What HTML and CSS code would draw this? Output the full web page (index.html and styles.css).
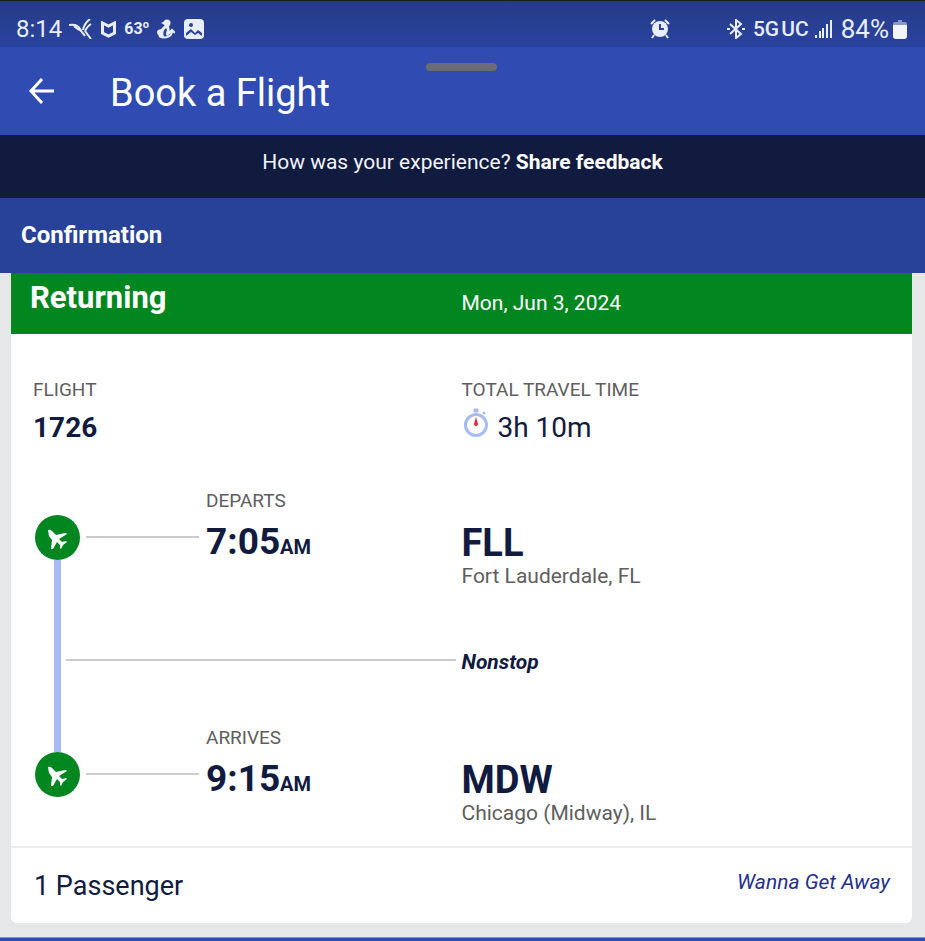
FILE: index.html
```html
<!DOCTYPE html>
<html lang="en">
<head>
    <meta charset="UTF-8">
    <meta name="viewport" content="width=device-width, initial-scale=1.0">
    <title>Book a Flight</title>
    <link rel="stylesheet" href="styles.css">
</head>
<body>
    <div class="status-bar">
        <div class="status-left">
            <span class="clock">8:14</span>
            <svg class="icon-bird" width="24" height="20" viewBox="0 0 24 20" fill="none" stroke="#e8eefc">
                <path d="M0 6c6-1 9 0 11 4 1 3 3 4 5 7" stroke-width="2" />
                <path d="M5 7c3 3 5 4 8 5" stroke-width="2" />
                <path d="M21 0c-4 3-6 6-7 11M22 5c-3 2-5 4-6 8M16 12l6 8" stroke-width="2" />
            </svg>
            <svg width="15" height="17" viewBox="0 0 15 17" fill="none" stroke="#e8eefc" stroke-width="3">
                <path d="M1.500 2v10l6 3 6-3V2l-6 3z" />
            </svg>
            <span class="temp">63<sup>o</sup></span>
            <svg width="18" height="20" viewBox="0 0 18 20" fill="#e8eefc">
                <circle cx="10" cy="4" r="3.500" />
                <path d="M4 4l4-2v4zM7 7h5l1 6q0 3-3 4-2-2 0-6l-1-2q-4 3-2 9-7 0-7-5 0-2 4-3z" />
                <path d="M2 17c6 3 13 1 13-5M12 14l3-3 3 3" fill="none" stroke="#e8eefc" stroke-width="2" />
            </svg>
            <svg width="20" height="20" viewBox="0 0 20 20">
                <rect width="20" height="20" rx="4" fill="#e8eefc" />
                <path d="M2 14l5-4 4 4 3-3 4 3v3q0 1-1 1H3q-1 0-1-1z" fill="#2a429a" />
                <path d="M2 17l5-4 4 3 3-2 4 3v1H2z" fill="#e8eefc" />
                <circle cx="7" cy="6" r="2" fill="#2a429a" />
            </svg>
        </div>
        <div class="status-right">
            <svg class="icon-alarm" width="20" height="20" viewBox="0 0 20 20" fill="none" stroke="#e8eefc" stroke-width="2">
                <circle cx="10" cy="10" r="8" fill="#e8eefc" stroke="none" />
                <path d="M1 5l4-4M19 5l-4-4M4 16l-2 3M16 16l2 3" />
                <path d="M10 5v5h4" stroke="#2a429a" />
            </svg>
            <svg width="18" height="20" viewBox="0 0 18 20" fill="none" stroke="#e8eefc" stroke-width="2">
                <path d="M3 5l11 10-5 4V1l5 4L3 15" />
                <path d="M0 10h3M15 10h3" />
            </svg>
            <span class="network">5G&#8202;UC</span>
            <svg class="icon-signal" width="18" height="18" viewBox="0 0 18 18" fill="#e8eefc">
                <path d="M0 15h2v3H0zM4 11h2v7H4zM7 8h2v10H7zM11 4h2v14h-2zM15 0h2v18h-2z" />
            </svg>
            <span class="battery-level">84%</span>
            <svg width="14" height="19" viewBox="0 0 14 19">
                <path d="M5 0h4v2h3q2 0 2 2v2H0V4q0-2 2-2h3z" fill="#8898cb" />
                <path d="M0 5h14v11q0 3-3 3H3q-3 0-3-3z" fill="#f2f5fe" />
            </svg>
        </div>
    </div>

    <header class="app-bar">
        <button class="back" type="button" aria-label="Back">
            <svg width="26" height="26" viewBox="0 0 26 26" fill="none" stroke="#fff" stroke-width="3">
                <path d="M26 13H3M14 1L3 13l11 12" />
            </svg>
        </button>
        <h1>Book a Flight</h1>
        <span class="handle"></span>
    </header>

    <div class="feedback">How was your experience? <a href="#feedback">Share feedback</a></div>
    <h2 class="page-title">Confirmation</h2>

    <main>
        <section class="card">
            <div class="card-header">
                <h3>Returning</h3>
                <span class="date">Mon, Jun 3, 2024</span>
            </div>

            <div class="summary">
                <div>
                    <div class="label">FLIGHT</div>
                    <div class="value strong">1726</div>
                </div>
                <div>
                    <div class="label">TOTAL TRAVEL TIME</div>
                    <div class="value">
                        <svg width="26" height="30" viewBox="0 0 26 30">
                            <circle cx="14" cy="17" r="10.500" fill="none" stroke="#a7bbf2" stroke-width="3" />
                            <path d="M12 1h4v3h-4z" fill="#a7bbf2" stroke="#a7bbf2" />
                            <circle cx="22" cy="5" r="1.500" fill="#a7bbf2" />
                            <path d="M14 9l2 7a2 2 0 1 1-4 0z" fill="#e02440" />
                        </svg>
                        <span>3h 10m</span>
                    </div>
                </div>
            </div>

            <div class="route">
                <div class="rail">
                    <span class="stop">
                        <svg width="20" height="20" viewBox="0 0 20 20" fill="#fff">
                            <path d="M0 1q2-1 4 1l4 4 9-2q2 0 2 1l-8 5 3 3 4-1 1 1-4 3-2 4-1-1v-3l-3-3-4 7-2 0 1-9-3-4z" />
                        </svg>
                    </span>
                    <span class="track"></span>
                    <span class="stop">
                        <svg width="20" height="20" viewBox="0 0 20 20" fill="#fff">
                            <path d="M0 1q2-1 4 1l4 4 9-2q2 0 2 1l-8 5 3 3 4-1 1 1-4 3-2 4-1-1v-3l-3-3-4 7-2 0 1-9-3-4z" />
                        </svg>
                    </span>
                </div>

                <div class="connector"></div>
                <div class="time-block">
                    <div class="label">DEPARTS</div>
                    <div class="time">7:05<small>AM</small></div>
                </div>
                <div class="place">
                    <div class="code">FLL</div>
                    <div class="city">Fort Lauderdale, FL</div>
                </div>

                <div class="stops-line"></div>
                <div class="stops">Nonstop</div>

                <div class="connector"></div>
                <div class="time-block">
                    <div class="label">ARRIVES</div>
                    <div class="time">9:15<small>AM</small></div>
                </div>
                <div class="place">
                    <div class="code">MDW</div>
                    <div class="city">Chicago (Midway), IL</div>
                </div>
            </div>

            <div class="card-footer">
                <span class="passengers">1 Passenger</span>
                <a class="fare" href="#fare">Wanna Get Away</a>
            </div>
        </section>
    </main>
    <div class="bottom-bar"></div>
</body>
</html>
```

FILE: styles.css
```css
* {
    box-sizing: border-box;
}
body {
    margin: 0;
    font-family: Roboto, Arial, sans-serif;
    color: #111b40;
    background-color: #e5e7e9;
}
h1, h2, h3 {
    margin: 0;
}
svg {
    display: block;
    flex: none;
}
a {
    text-decoration: none;
}

/* phone status bar */
.status-bar {
    display: flex;
    justify-content: space-between;
    height: 47px;
    padding: 10px 18px 0 16px;
    border-top: 1px solid #1c1d22;
    background: linear-gradient(#263b88, #2a439f);
    color: #e8eefc;
}
.status-left, .status-right {
    display: flex;
    align-items: center;
    height: 36px;
}
.clock {
    font-size: 24px;
}
.icon-bird {
    margin-left: 7px;
    margin-right: 8px;
}
.temp {
    margin: 0 8px;
    font-size: 16px;
    font-weight: 700;
}
.temp sup {
    font-size: 11px;
    line-height: 1;
}
.status-left svg:last-child {
    margin-left: 9px;
}
.icon-alarm {
    margin-right: 57px;
}
.network {
    margin: 0 6px 0 8px;
    font-size: 21px;
    font-weight: 500;
}
.icon-signal {
    margin-right: 8px;
}
.battery-level {
    margin-right: 4px;
    font-size: 26px;
}

.app-bar {
    position: relative;
    display: flex;
    align-items: center;
    height: 88px;
    padding: 2px 28px;
    background-color: #304cb2;
    color: #fff;
}
.back {
    margin-right: 56px;
    padding: 0;
    border: none;
    background: none;
    cursor: pointer;
}
.app-bar h1 {
    padding-top: 4px;
    font-size: 38px;
    font-weight: 400;
}
.handle {
    position: absolute;
    top: 16px;
    left: 46%;
    width: 71px;
    height: 8px;
    border-radius: 4px;
    background-color: #6b6c72;
}

.feedback {
    height: 63px;
    padding-top: 14px;
    background-color: #111b40;
    color: #f2f4fa;
    font-size: 21px;
    line-height: 26px;
    text-align: center;
}
.feedback a {
    color: #fff;
    font-weight: 700;
}
.page-title {
    padding: 22px 21px 23px;
    background-color: #284297;
    color: #fff;
    font-size: 24px;
    line-height: 30px;
    font-weight: 700;
}

main {
    padding: 0 13px 14px 11px;
}
.card {
    border-radius: 0 0 6px 6px;
    background-color: #fff;
}
.card-header, .summary {
    display: grid;
    grid-template-columns: 1fr 1fr;
}
.card-header {
    height: 61px;
    background-color: #02861f;
    color: #fff;
}
.card-header h3 {
    padding-left: 19px;
    font-size: 31px;
    line-height: 50px;
    font-weight: 700;
}
.date {
    font-size: 21px;
    line-height: 60px;
}
.summary {
    padding-top: 44px;
}
.summary > div:first-child {
    padding-left: 22px;
}
.label {
    color: #5e5e5e;
    font-size: 19px;
    line-height: 24px;
}
.value {
    display: flex;
    gap: 10px;
    margin-top: 6px;
    font-size: 28px;
    line-height: 40px;
}
.strong {
    font-weight: 700;
}

/* departure, stops, arrival */
.route {
    display: grid;
    grid-template-columns: 69px 126px 1fr 50%;
    margin-top: 41px;
    padding-bottom: 22px;
}
.rail {
    grid-column: 1;
    grid-row: 1 / 4;
    display: flex;
    flex-direction: column;
    align-items: center;
    padding: 26px 0 27px 24px;
}
.stop {
    display: flex;
    align-items: center;
    justify-content: center;
    width: 45px;
    height: 45px;
    padding-top: 3px;
    border-radius: 50%;
    background-color: #02861f;
}
.track {
    flex: 1;
    width: 7px;
    background-color: #a7bbf2;
}
.connector {
    grid-column: 2;
    height: 2px;
    margin: 47px 7px 0 6px;
    background-color: #cccccc;
}
.time {
    margin-top: 7px;
    font-size: 37px;
    line-height: 44px;
    font-weight: 700;
}
.time small {
    font-size: 20px;
    font-weight: 700;
}
.place {
    padding-top: 32px;
}
.code {
    font-size: 38px;
    line-height: 44px;
    font-weight: 700;
}
.city {
    color: #5e5e5e;
    font-size: 21px;
    line-height: 22px;
}
.stops-line {
    grid-column: 2 / 4;
    height: 2px;
    margin: 72px 6px 0 -14px;
    background-color: #cccccc;
}
.stops {
    padding: 63px 0 52px;
    font-size: 21px;
    line-height: 24px;
    font-weight: 700;
    font-style: italic;
}

.card-footer {
    display: flex;
    justify-content: space-between;
    height: 77px;
    padding: 18px 22px 0 23px;
    border-top: 2px solid #ebebeb;
}
.passengers {
    font-size: 27px;
    line-height: 40px;
}
.fare {
    color: #23308f;
    font-size: 21px;
    line-height: 32px;
    font-style: italic;
}
.bottom-bar {
    height: 4px;
    border-top: 1px solid #7d90d6;
    background-color: #304cb2;
}
```
